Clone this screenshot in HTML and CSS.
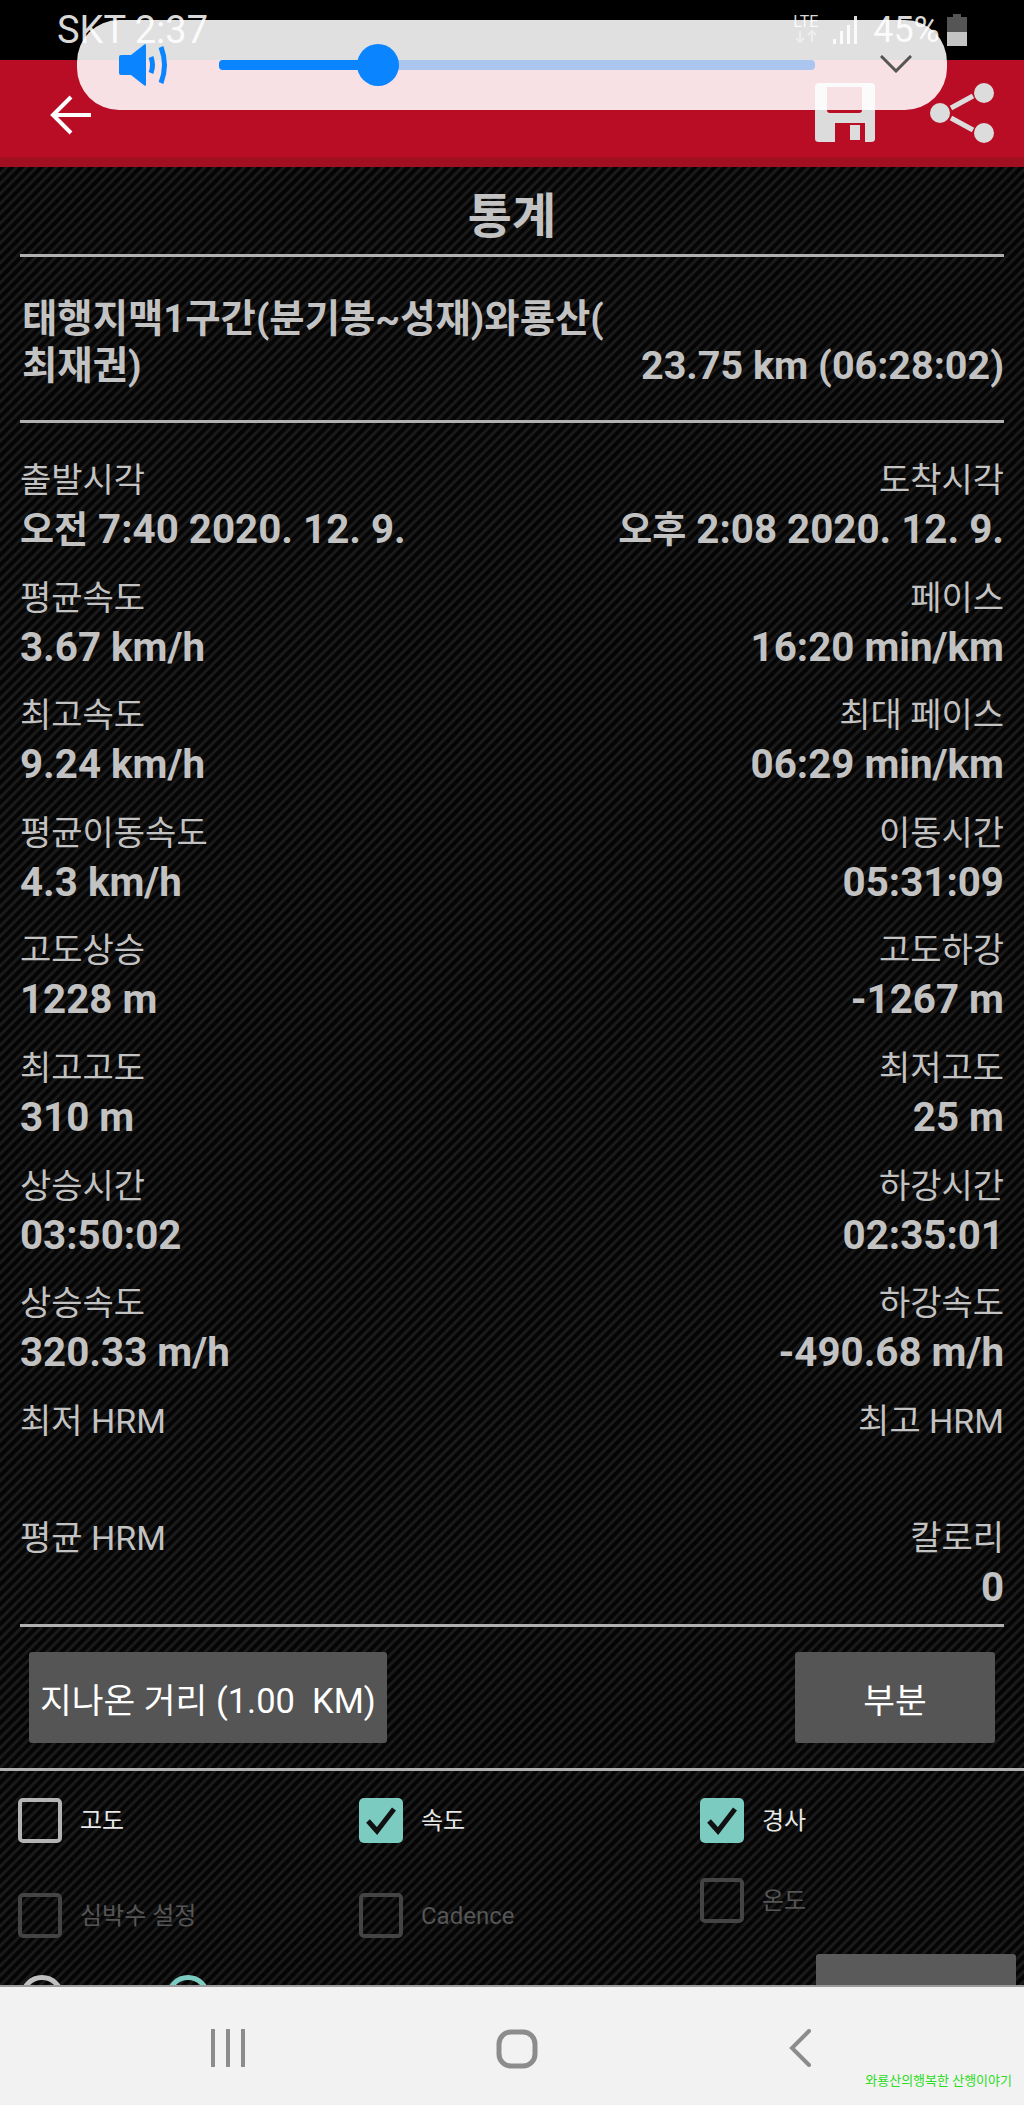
FILE: index.html
```html
<!DOCTYPE html>
<html lang="ko">
<head>
    <meta charset="UTF-8">
    <meta name="viewport" content="width=device-width, initial-scale=1.0">
    <title>통계</title>
    <link rel="stylesheet" href="styles.css">
</head>
<body>

    <div class="status-bar">
        <span class="status-left">SKT 2:37</span>
        <div class="status-right">
            <span class="lte">LTE<svg width="26" height="13" viewBox="0 0 26 13"><path d="M7 1v11M3 8l4 4 4-4M19 12V1M15 5l4-4 4 4" fill="none" stroke="#777" stroke-width="2"/></svg></span>
            <svg class="signal" width="25" height="28" viewBox="0 0 25 28"><path d="M0 23h3v5H0zM7 15h3v13H7zM14 9h3v19h-3zM21 0h3v28h-3z" fill="#d8d8d8"/></svg>
            <span class="battery-text">45%</span>
            <svg class="battery" width="20" height="32" viewBox="0 0 20 32"><path d="M6 0h8v3H6z" fill="#555"/><path d="M0 3h20v15H0z" fill="#555"/><path d="M0 18h20v14H0z" fill="#c4c4c4"/></svg>
        </div>
    </div>

    <div class="toolbar">
        <svg class="back" width="44" height="42" viewBox="0 0 44 42"><path d="M22 3L4 21l18 18M4 21h38" fill="none" stroke="#fff" stroke-width="4"/></svg>
        <div class="toolbar-actions">
            <svg width="60" height="60" viewBox="0 0 60 60"><path fill-rule="evenodd" d="M4 0h52q4 0 4 4v52q0 3-4 3h-6V40H20v19H4q-4 0-4-3V4q0-4 4-4zM12 4v23q0 3 3 3h29q3 0 3-3V4z" fill="#dcdcdc"/><path d="M35 42h10v15H35z" fill="#dcdcdc"/></svg>
            <svg width="65" height="60" viewBox="0 0 65 60"><path d="M21 25l22-12M21 35l22 12" stroke="#dcdcdc" stroke-width="5"/><circle cx="10" cy="30" r="10" fill="#dcdcdc"/><circle cx="54" cy="10" r="10" fill="#dcdcdc"/><circle cx="54" cy="50" r="10" fill="#dcdcdc"/></svg>
        </div>
    </div>

    <div class="volume-panel">
        <svg class="speaker" width="51" height="42" viewBox="0 0 51 42"><path d="M0 13q0-2 2-2h10L26 0q1 0 1 2v38q0 2-1 2L12 31H2q-2 0-2-2z" fill="#0a84ff"/><path d="M32 13q3 8 0 16M42 3q7 18 0 36" fill="none" stroke="#0a84ff" stroke-width="5"/></svg>
        <div class="slider">
            <div class="slider-fill"></div>
            <div class="slider-thumb"></div>
        </div>
        <svg class="chevron" width="32" height="18" viewBox="0 0 32 18"><path d="M1 1l15 15L31 1" fill="none" stroke="#555" stroke-width="3"/></svg>
    </div>

    <div class="content">
        <h1 class="title">통계</h1>
        <div class="track">
            <div class="track-name">태행지맥1구간(분기봉~성재)와룡산(<br>최재권)</div>
            <div class="track-total">23.75 km (06:28:02)</div>
        </div>

        <div class="stats">
            <div class="stat"><div class="label">출발시각</div><div class="value"><span class="ko">오전</span> 7:40 2020. 12. 9.</div></div>
            <div class="stat right"><div class="label">도착시각</div><div class="value"><span class="ko">오후</span> 2:08 2020. 12. 9.</div></div>
            <div class="stat"><div class="label">평균속도</div><div class="value">3.67 km/h</div></div>
            <div class="stat right"><div class="label">페이스</div><div class="value">16:20 min/km</div></div>
            <div class="stat"><div class="label">최고속도</div><div class="value">9.24 km/h</div></div>
            <div class="stat right"><div class="label">최대 페이스</div><div class="value">06:29 min/km</div></div>
            <div class="stat"><div class="label">평균이동속도</div><div class="value">4.3 km/h</div></div>
            <div class="stat right"><div class="label">이동시간</div><div class="value">05:31:09</div></div>
            <div class="stat"><div class="label">고도상승</div><div class="value">1228 m</div></div>
            <div class="stat right"><div class="label">고도하강</div><div class="value">-1267 m</div></div>
            <div class="stat"><div class="label">최고고도</div><div class="value">310 m</div></div>
            <div class="stat right"><div class="label">최저고도</div><div class="value">25 m</div></div>
            <div class="stat"><div class="label">상승시간</div><div class="value">03:50:02</div></div>
            <div class="stat right"><div class="label">하강시간</div><div class="value">02:35:01</div></div>
            <div class="stat"><div class="label">상승속도</div><div class="value">320.33 m/h</div></div>
            <div class="stat right"><div class="label">하강속도</div><div class="value">-490.68 m/h</div></div>
            <div class="stat"><div class="label">최저 HRM</div><div class="value"></div></div>
            <div class="stat right"><div class="label">최고 HRM</div><div class="value"></div></div>
            <div class="stat"><div class="label">평균 HRM</div><div class="value"></div></div>
            <div class="stat right"><div class="label">칼로리</div><div class="value">0</div></div>
        </div>

        <div class="buttons">
            <button class="btn btn-distance">지나온 거리 (1.00&nbsp; KM)</button>
            <button class="btn btn-part">부분</button>
        </div>

        <div class="options">
            <div class="option"><span class="box"></span>고도</div>
            <div class="option"><span class="box checked"><svg width="32" height="28" viewBox="0 0 32 28"><path d="M3 14l9 10L29 2" fill="none" stroke="#111" stroke-width="5"/></svg></span>속도</div>
            <div class="option"><span class="box checked"><svg width="32" height="28" viewBox="0 0 32 28"><path d="M3 14l9 10L29 2" fill="none" stroke="#111" stroke-width="5"/></svg></span>경사</div>
            <div class="option dim"><span class="box"></span>심박수 설정</div>
            <div class="option dim"><span class="box"></span>Cadence</div>
            <div class="option dim lifted"><span class="box"></span>온도</div>
        </div>

        <div class="bottom-row">
            <span class="radio"></span>
            <span class="radio on"></span>
            <span class="gray-btn"></span>
        </div>
    </div>

    <div class="nav-bar">
        <svg width="36" height="38" viewBox="0 0 36 38"><path d="M3 1v36M18 1v36M33 1v36" stroke="#8c8c8c" stroke-width="4" stroke-linecap="round"/></svg>
        <svg width="42" height="40" viewBox="0 0 42 40"><rect x="3" y="3" width="36" height="34" rx="12" fill="none" stroke="#8c8c8c" stroke-width="5"/></svg>
        <svg width="24" height="38" viewBox="0 0 24 38"><path d="M21 2L4 19l17 17" fill="none" stroke="#8c8c8c" stroke-width="4" stroke-linecap="round"/></svg>
        <span class="watermark">와룡산의행복한 산행이야기</span>
    </div>

</body>
</html>
```

FILE: styles.css
```css
* {
    box-sizing: border-box;
}
html, body {
    margin: 0;
    height: 2105px;
}
body {
    display: flex;
    flex-direction: column;
    position: relative;
    overflow: hidden;
    width: 1024px;
    background-color: #000;
    font-family: Roboto, "Noto Sans CJK KR", sans-serif;
    color: #c2c2c2;
}

/* status bar */
.status-bar {
    height: 60px;
    flex: none;
    background-color: #000;
    display: flex;
    justify-content: space-between;
    padding: 9px 57px 0 57px;
    color: #d8d8d8;
    font-size: 38px;
    line-height: 42px;
}
.status-right {
    display: flex;
    align-items: flex-start;
}
.lte {
    display: flex;
    flex-direction: column;
    font-size: 16px;
    line-height: 16px;
    margin-top: 5px;
    width: 30px;
    margin-right: 10px;
}
.signal {
    margin-top: 7px;
    margin-right: 15px;
}
.battery-text {
    font-size: 36px;
    margin-right: 7px;
}
.battery {
    margin-top: 5px;
}

/* red toolbar */
.toolbar {
    height: 107px;
    flex: none;
    background-color: #b90c25;
    border-bottom: 10px solid #a10f20;
    display: flex;
    justify-content: space-between;
    padding: 23px 29px 0 49px;
}
.back {
    margin-top: 11px;
}
.toolbar-actions {
    display: flex;
    gap: 55px;
}

/* volume panel lies over the status bar and toolbar */
.volume-panel {
    position: absolute;
    left: 77px;
    top: 20px;
    width: 870px;
    height: 90px;
    border-radius: 42px;
    background-color: rgba(255, 255, 255, 0.878);
    display: flex;
    align-items: center;
    padding: 0 30px 0 42px;
}
.speaker {
    margin-top: -1px;
}
.slider {
    position: relative;
    flex: none;
    width: 596px;
    height: 10px;
    margin-left: 49px;
    border-radius: 4px;
    background-color: #aac6ee;
}
.slider-fill {
    width: 160px;
    height: 100%;
    border-radius: 4px;
    background-color: #0a84ff;
}
.slider-thumb {
    position: absolute;
    left: 138px;
    top: -16px;
    width: 42px;
    height: 42px;
    border-radius: 50%;
    background-color: #0a84ff;
}
.chevron {
    margin-left: 65px;
    margin-top: -2px;
}

/* main content */
.content {
    flex: 1;
    min-height: 0;
    overflow: hidden;
    background-color: #0d0d0d;
    background-image: repeating-linear-gradient(135deg, #050505 0, #050505 3px, #1a1a1a 4px, #1a1a1a 6px, #050505 7px);
    padding: 0 20px;
}
.title {
    margin: 0;
    height: 90px;
    border-bottom: 3px solid #b0b0b0;
    text-align: center;
    font-size: 48px;
    line-height: 100px;
    font-weight: 700;
}
.track {
    height: 166px;
    border-bottom: 3px solid #b0b0b0;
    display: flex;
    justify-content: space-between;
    align-items: flex-end;
    padding: 0 0 31px 2px;
    line-height: 47px;
    font-weight: 700;
}
.track-name {
    font-size: 38.4px;
}
.track-total {
    font-size: 39.5px;
}
.stats {
    display: grid;
    grid-template-columns: 1fr 1fr;
    grid-auto-rows: 117.6px;
    padding-top: 34px;
    height: 1204px;
    border-bottom: 3px solid #b0b0b0;
}
.stat.right {
    text-align: right;
}
.label {
    font-size: 34px;
    line-height: 46px;
}
.value {
    font-size: 40.3px;
    line-height: 48px;
    margin-top: 3px;
    font-weight: 700;
    white-space: nowrap;
}
.ko {
    font-size: 37px;
}
.buttons {
    display: flex;
    justify-content: space-between;
    height: 144px;
    margin: 0 -20px;
    padding: 25px 29px;
    border-bottom: 3px solid #b0b0b0;
}
.btn {
    height: 91px;
    border: none;
    border-radius: 3px;
    background-color: #555;
    color: #fff;
    font-family: Roboto, "Noto Sans CJK KR", sans-serif;
    font-size: 34.5px;
    padding: 0;
}
.btn-distance {
    width: 358px;
}
.btn-part {
    width: 200px;
}
.options {
    display: grid;
    grid-template-columns: 341px 341px 1fr;
    grid-auto-rows: 95px;
    margin: 27px -2px 0;
}
.option {
    display: flex;
    align-items: flex-start;
    gap: 18px;
    font-size: 24px;
    line-height: 46px;
    color: #e8e8e8;
}
.box {
    width: 44px;
    height: 45px;
    flex: none;
    border: 4px solid #b4b4b4;
    border-radius: 5px;
    display: flex;
    align-items: center;
    justify-content: center;
}
.box.checked {
    border: none;
    background-color: #7ccbc1;
}
.option.dim {
    color: #555;
}
.option.dim .box {
    border-color: #444;
}
.option.lifted {
    margin-top: -15px;
}
.bottom-row {
    display: flex;
    margin: -34px 0 0;
    gap: 102px;
    align-items: flex-start;
}
.radio {
    width: 44px;
    height: 44px;
    margin-top: 21px;
    flex: none;
    border: 5px solid #c0c0c0;
    border-radius: 50%;
}
.radio.on {
    border-color: #7ccbc1;
}
.gray-btn {
    width: 200px;
    height: 91px;
    margin-left: 504px;
    flex: none;
    border-radius: 3px;
    background-color: #5a5a5a;
}

/* system nav */
.nav-bar {
    position: relative;
    height: 120px;
    flex: none;
    border-top: 2px solid #9a9a9a;
    background-color: #f2f2f2;
    display: flex;
    align-items: flex-start;
    padding: 42px 212px 0 210px;
    justify-content: space-between;
}
.watermark {
    position: absolute;
    right: 12px;
    top: 85px;
    color: #2cdc1e;
    font-size: 13px;
    line-height: 18px;
    white-space: nowrap;
}
```
